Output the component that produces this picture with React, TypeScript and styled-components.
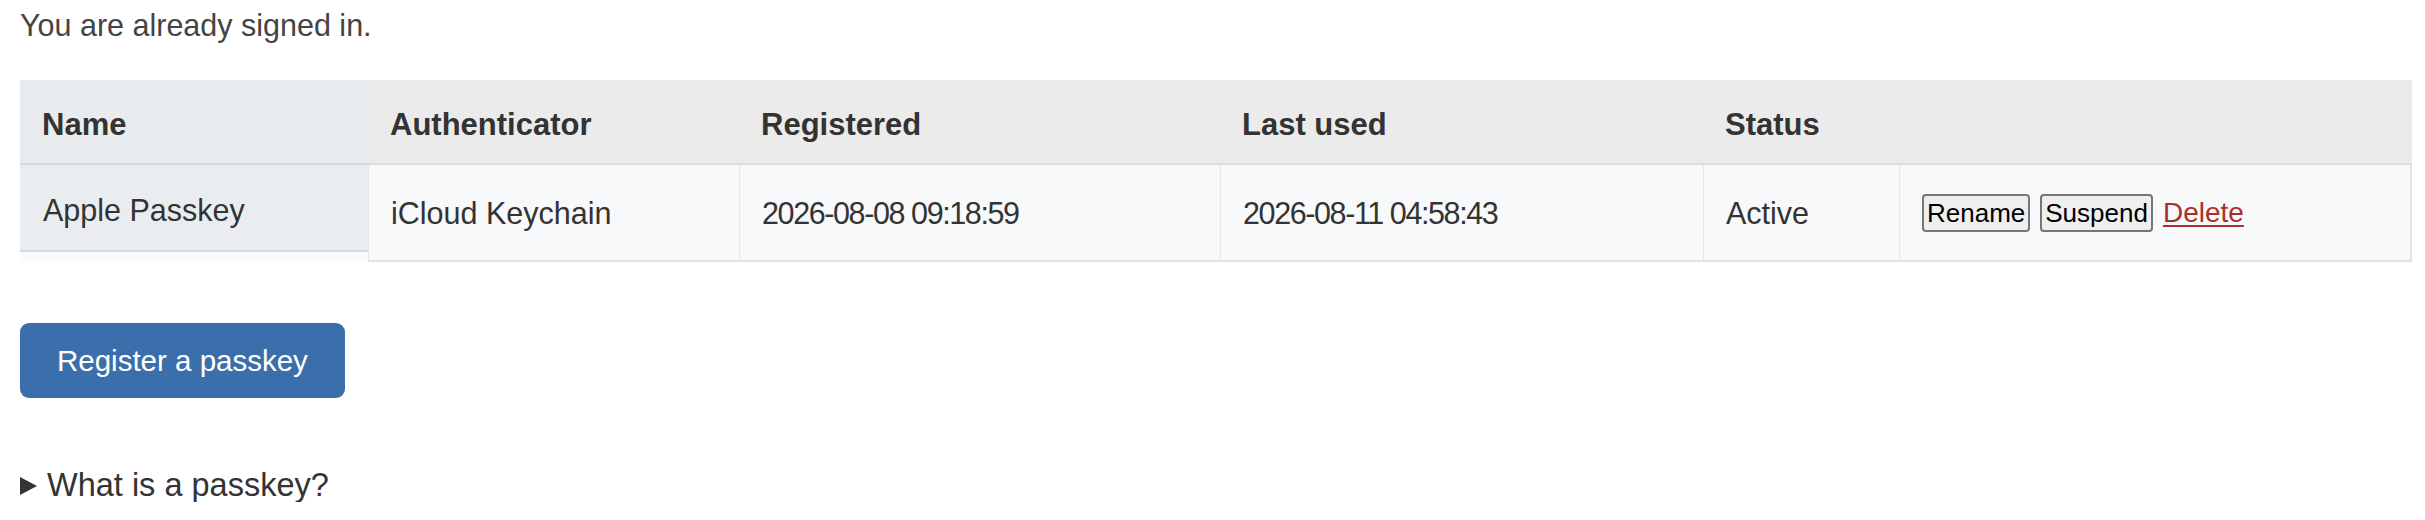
import React from "react";
import styled, { createGlobalStyle } from "styled-components";

const GlobalStyle = createGlobalStyle`
  html, body { margin: 0; padding: 0; background: #ffffff; }
  body {
    font-family: "Liberation Sans", Arial, Helvetica, sans-serif;
    color: #333333;
  }
`;

const Page = styled.main`
  padding: 7.5px 13px 0 20px;
  font-size: 30.5px;
`;

const Notice = styled.p`
  margin: 0;
  line-height: 34px;
  color: #444444;
`;

const Table = styled.div`
  margin-top: 38.5px;
  display: grid;
  grid-template-columns: 348px 371px 481px 483px 196px 1fr;
  background: #fafbfc;
`;

const HeadCell = styled.div<{ $name?: boolean }>`
  box-sizing: border-box;
  height: 85px;
  display: flex;
  align-items: center;
  padding: 6px 22px 0;
  font-size: 31px;
  font-weight: 700;
  color: #333333;
  background: ${(p) => (p.$name ? "#e8ecef" : "#ebebeb")};
  border-bottom: 2px solid ${(p) => (p.$name ? "#d6dadd" : "#dddddd")};
`;

const Cell = styled.div<{ $last?: boolean }>`
  box-sizing: border-box;
  min-height: 97px;
  display: flex;
  align-items: center;
  padding: 2px 22px 0;
  background: #f8f9fa;
  border-left: 1px solid #e4e5e6;
  border-bottom: 2px solid #e2e3e4;
  border-right: ${(p) => (p.$last ? "2px solid #e4e4e4" : "none")};
  color: #333333;
`;

const NameCell = styled.div`
  box-sizing: border-box;
  align-self: start;
  height: 87px;
  display: flex;
  align-items: center;
  padding: 6px 23px 0;
  background: #e9edf0;
  border-bottom: 2px solid #d3d9dc;
  color: #333333;
`;

const Timestamp = styled.span`
  letter-spacing: -1.4px;
`;

const Actions = styled.div`
  display: flex;
  align-items: center;
  gap: 10px;
  margin-top: -2px;
`;

const SmallButton = styled.button`
  font-family: "Liberation Sans", Arial, sans-serif;
  font-size: 26px;
  line-height: 30px;
  color: #000000;
  background: #efefef;
  border: 2px solid #767676;
  border-radius: 4px;
  padding: 2px 3px;
  margin: 0;
  cursor: pointer;
`;

const DangerLink = styled.a`
  font-size: 28px;
  color: #a8302c;
  text-decoration: underline;
  text-underline-offset: 3px;
  cursor: pointer;
`;

const PrimaryButton = styled.button`
  display: block;
  margin-top: 61px;
  height: 75px;
  padding: 0 37px;
  font-family: "Liberation Sans", Arial, sans-serif;
  font-size: 29.5px;
  color: #ffffff;
  background: #3a6fab;
  border: none;
  border-radius: 9px;
  cursor: pointer;
`;

const Details = styled.details`
  margin-top: 70px;
`;

const Summary = styled.summary`
  list-style: none;
  display: flex;
  align-items: center;
  gap: 10px;
  line-height: 34px;
  font-size: 32.5px;
  color: #333333;
  cursor: pointer;
  &::-webkit-details-marker { display: none; }
`;

const Triangle = styled.span`
  width: 0;
  height: 0;
  border-top: 9.5px solid transparent;
  border-bottom: 9.5px solid transparent;
  border-left: 17px solid #333333;
  margin-top: 2px;
`;

const headers = ["Authenticator", "Registered", "Last used", "Status", ""];

export default function App() {
  return (
    <>
      <GlobalStyle />
      <Page>
        <Notice>You are already signed in.</Notice>
        <Table>
          <HeadCell $name>Name</HeadCell>
          {headers.map((h, i) => (
            <HeadCell key={i}>{h}</HeadCell>
          ))}
          <NameCell>Apple Passkey</NameCell>
          <Cell>iCloud Keychain</Cell>
          <Cell>
            <Timestamp>2026-08-08 09:18:59</Timestamp>
          </Cell>
          <Cell>
            <Timestamp>2026-08-11 04:58:43</Timestamp>
          </Cell>
          <Cell>Active</Cell>
          <Cell $last>
            <Actions>
              <SmallButton>Rename</SmallButton>
              <SmallButton>Suspend</SmallButton>
              <DangerLink>Delete</DangerLink>
            </Actions>
          </Cell>
        </Table>
        <PrimaryButton>Register a passkey</PrimaryButton>
        <Details>
          <Summary>
            <Triangle />
            What is a passkey?
          </Summary>
        </Details>
      </Page>
    </>
  );
}
